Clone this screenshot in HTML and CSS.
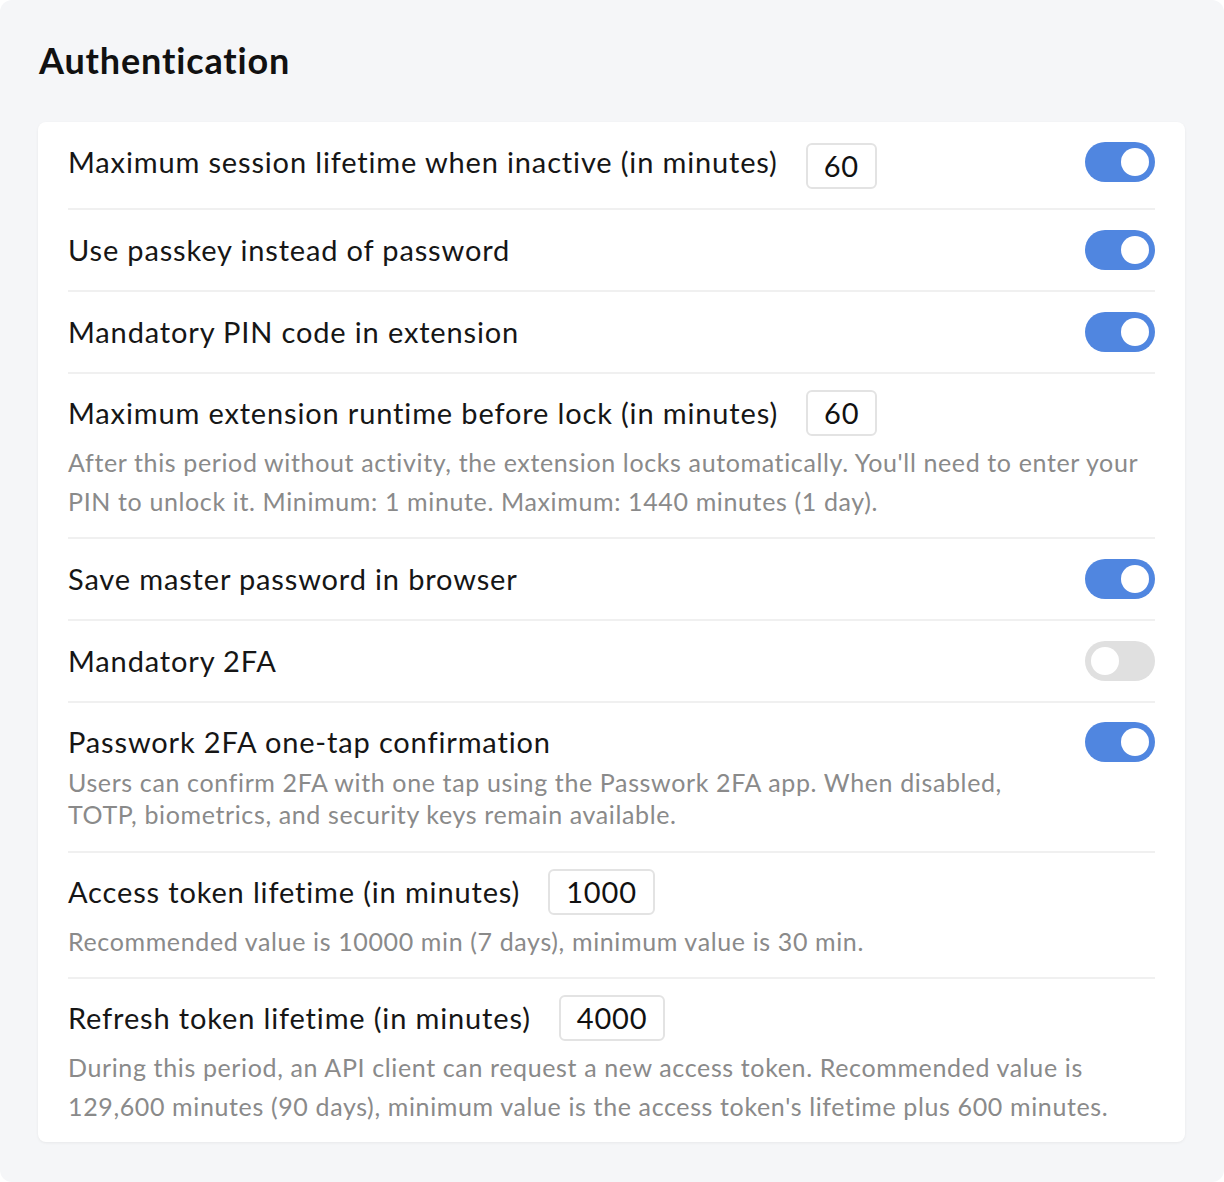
FILE: index.html
```html
<!DOCTYPE html>
<html>
<head>
<meta charset="utf-8">
<link rel="stylesheet" href="styles.css">
</head>
<body>
<div class="panel">
  <h1 class="title">Authentication</h1>
  <div class="card">
    <div class="row row-first">
      <div class="main">
        <div class="line"><span class="label">Maximum session lifetime when inactive (in minutes)</span><span class="num">60</span></div>
      </div>
      <div class="toggle on"><span class="knob"></span></div>
    </div>
    <div class="row">
      <div class="main"><div class="line"><span class="label">Use passkey instead of password</span></div></div>
      <div class="toggle on"><span class="knob"></span></div>
    </div>
    <div class="row">
      <div class="main"><div class="line"><span class="label">Mandatory PIN code in extension</span></div></div>
      <div class="toggle on"><span class="knob"></span></div>
    </div>
    <div class="row row-desc">
      <div class="main">
        <div class="line"><span class="label">Maximum extension runtime before lock (in minutes)</span><span class="num">60</span></div>
        <p class="desc">After this period without activity, the extension locks automatically. You'll need to enter your PIN to unlock it. Minimum: 1 minute. Maximum: 1440 minutes (1 day).</p>
      </div>
    </div>
    <div class="row">
      <div class="main"><div class="line"><span class="label">Save master password in browser</span></div></div>
      <div class="toggle on"><span class="knob"></span></div>
    </div>
    <div class="row">
      <div class="main"><div class="line"><span class="label">Mandatory 2FA</span></div></div>
      <div class="toggle"><span class="knob"></span></div>
    </div>
    <div class="row row-toggle-desc">
      <div class="main">
        <div class="line"><span class="label">Passwork 2FA one-tap confirmation</span></div>
        <p class="desc desc-tight">Users can confirm 2FA with one tap using the Passwork 2FA app. When disabled, TOTP, biometrics, and security keys remain available.</p>
      </div>
      <div class="toggle on"><span class="knob"></span></div>
    </div>
    <div class="row row-desc">
      <div class="main">
        <div class="line"><span class="label">Access token lifetime (in minutes)</span><span class="num">1000</span></div>
        <p class="desc">Recommended value is 10000 min (7 days), minimum value is 30 min.</p>
      </div>
    </div>
    <div class="row row-desc">
      <div class="main">
        <div class="line"><span class="label">Refresh token lifetime (in minutes)</span><span class="num">4000</span></div>
        <p class="desc">During this period, an API client can request a new access token. Recommended value is 129,600 minutes (90 days), minimum value is the access token's lifetime plus 600 minutes.</p>
      </div>
    </div>
  </div>
</div>
</body>
</html>
```
FILE: styles.css
```css
* { box-sizing: border-box; }
html, body { margin: 0; padding: 0; background: #ffffff; }
body {
  font-family: "Lato", "Noto Sans", sans-serif;
  color: #161616;
}
.panel {
  background: #f5f6f8;
  border-radius: 12px;
  min-height: 1182px;
  padding: 38px 39px 39px 38px;
}
.title {
  margin: 0 0 0 1px;
  font-size: 36px;
  font-weight: 700;
  letter-spacing: 0.85px;
  line-height: 44px;
  color: #111;
}
.card {
  margin-top: 40px;
  background: #fff;
  border-radius: 8px;
  box-shadow: 0 1px 3px rgba(0,0,0,0.06);
  padding: 0 30px;
}
.row {
  display: flex;
  align-items: center;
  justify-content: space-between;
  padding: 20px 0;
  border-top: 2px solid #f0f0f0;
}
.row:first-child { border-top: none; }
.row-first { align-items: flex-start; padding: 20px 0 19px; }
.row-first .line { align-items: flex-start; }
.row-first .num { margin-top: 1px; }
.row-desc { padding: 16px 0 16px; }
.row-toggle-desc { align-items: flex-start; padding: 19px 0 21px; }
.main { flex: 1; min-width: 0; }
.line {
  display: flex;
  align-items: center;
  gap: 28px;
  min-height: 40px;
}
.label {
  font-size: 29px;
  letter-spacing: 0.85px;
  line-height: 40px;
  white-space: nowrap;
}
.num {
  display: inline-block;
  height: 46px;
  padding: 0 16px;
  border: 2px solid #e3e3e3;
  border-radius: 6px;
  font-size: 29px;
  letter-spacing: 0.85px;
  line-height: 42px;
  color: #111;
}
.desc {
  margin: 7px 0 0;
  font-size: 25px;
  letter-spacing: 0.63px;
  line-height: 39px;
  color: #8a8a8a;
}
.desc-tight {
  margin-top: 4px;
  line-height: 32px;
  padding-right: 60px;
}
.toggle {
  flex: none;
  position: relative;
  width: 70px;
  height: 40px;
  border-radius: 20px;
  background: #e0e0e0;
}
.toggle.on { background: #5086e0; }
.knob {
  position: absolute;
  top: 6px;
  left: 6px;
  width: 28px;
  height: 28px;
  border-radius: 50%;
  background: #fff;
}
.toggle.on .knob { left: 36px; }
```
